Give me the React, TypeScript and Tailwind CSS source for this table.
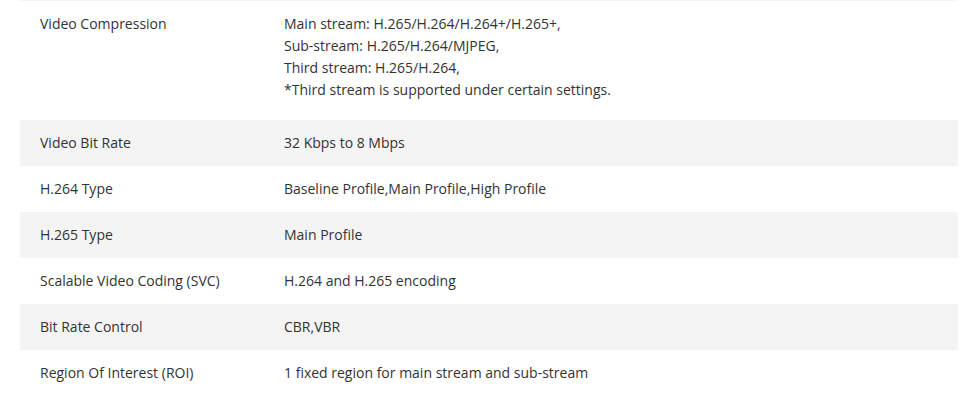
const rows: { label: string; value: string[] }[] = [
  {
    label: "Video Compression",
    value: [
      "Main stream: H.265/H.264/H.264+/H.265+,",
      "Sub-stream: H.265/H.264/MJPEG,",
      "Third stream: H.265/H.264,",
      "*Third stream is supported under certain settings.",
    ],
  },
  { label: "Video Bit Rate", value: ["32 Kbps to 8 Mbps"] },
  { label: "H.264 Type", value: ["Baseline Profile,Main Profile,High Profile"] },
  { label: "H.265 Type", value: ["Main Profile"] },
  { label: "Scalable Video Coding (SVC)", value: ["H.264 and H.265 encoding"] },
  { label: "Bit Rate Control", value: ["CBR,VBR"] },
  { label: "Region Of Interest (ROI)", value: ["1 fixed region for main stream and sub-stream"] },
];

export default function App() {
  return (
    <div className="min-h-[401px] bg-white px-5 text-[14px] leading-[22px] text-[#333]" style={{ fontFamily: '"Open Sans", sans-serif' }}>
      {/* tail of the previous row */}
      <div className="h-px bg-[#f4f4f4]"></div>
      <div className="flex w-[938px] flex-col">
        {rows.map((r, i) => (
          <div
            key={r.label}
            className={`flex ${i % 2 === 1 ? "bg-[#f4f4f4]" : "bg-white"} ${i === 0 ? "pt-3 pb-[19px]" : "py-3"}`}
          >
            <div className="w-[244px] shrink-0 px-5">{r.label}</div>
            <div className="flex-1 px-5">
              {r.value.map((v) => (
                <div key={v}>{v}</div>
              ))}
            </div>
          </div>
        ))}
      </div>
    </div>
  );
}
